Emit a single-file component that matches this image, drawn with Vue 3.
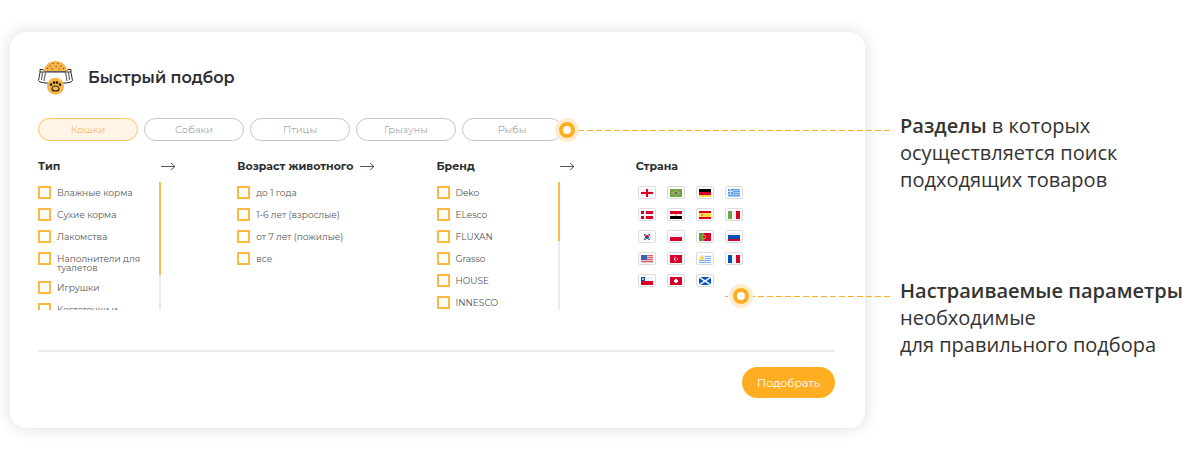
<script setup>
import { reactive, ref } from 'vue'

const tabs = ['Кошки', 'Собаки', 'Птицы', 'Грызуны', 'Рыбы']
const activeTab = ref('Кошки')

// Колонки с чекбоксами, thumb - высота ползунка в процентах
const columns = [
  {
    id: 'type',
    title: 'Тип',
    thumb: 73,
    items: ['Влажные корма', 'Сухие корма', 'Лакомства', 'Наполнители для туалетов', 'Игрушки', 'Когтеточки и']
  },
  {
    id: 'age',
    title: 'Возраст животного',
    thumb: 0,
    items: ['до 1 года', '1-6 лет (взрослые)', 'от 7 лет (пожилые)', 'все']
  },
  {
    id: 'brand',
    title: 'Бренд',
    thumb: 46,
    items: ['Deko', 'ELesco', 'FLUXAN', 'Grasso', 'HOUSE', 'INNESCO']
  }
]

// Флаги: прямоугольники [x, y, ширина, высота, цвет] на поле 12x8
const countries = [
  { name: 'Англия', rects: [[0, 0, 12, 8, '#f1f1f1'], [5, 0, 2, 8, '#d80027'], [0, 3, 12, 2, '#d80027']] },
  { name: 'Бразилия', rects: [[0, 0, 12, 8, '#6da544']], paths: [['M6 1 10.500 4 6 7 1.500 4z', '#b5b440'], ['M4.500 4a1.500 1.500 0 1 0 3 0a1.500 1.500 0 1 0-3 0', '#2f6bb5']] },
  { name: 'Германия', rects: [[0, 0, 12, 3, '#000'], [0, 3, 12, 3, '#d80027'], [0, 6, 12, 2, '#ffda44']] },
  { name: 'Греция', rects: [[0, 0, 12, 8, '#a9cdf7'], [0, 0, 12, 1, '#5a9ff0'], [0, 2, 12, 1, '#5a9ff0'], [0, 4, 12, 1, '#5a9ff0'], [0, 6, 12, 1, '#5a9ff0'], [0, 0, 5, 5, '#5a9ff0'], [2, 0, 1, 5, '#d5e6fb'], [0, 2, 5, 1, '#d5e6fb']] },
  { name: 'Дания', rects: [[0, 0, 12, 8, '#d80027'], [3, 0, 2, 8, '#f1f1f1'], [0, 3, 12, 2, '#f1f1f1']] },
  { name: 'Египет', rects: [[0, 0, 12, 3, '#d80027'], [0, 3, 12, 2, '#f1f1f1'], [0, 5, 12, 3, '#000'], [5, 3, 2, 2, '#ffb98a']] },
  { name: 'Испания', rects: [[0, 0, 12, 8, '#d80027'], [0, 2, 12, 4, '#ffda44'], [2, 3, 2, 2, '#e59a3a']] },
  { name: 'Италия', rects: [[0, 0, 4, 8, '#6da544'], [4, 0, 4, 8, '#f1f1f1'], [8, 0, 4, 8, '#d80027']] },
  { name: 'Корея', rects: [[0, 0, 12, 8, '#f7f7f7']], paths: [['M3 1h2v1H4v1H3zM7 1h2v2H8V2H7zM3 5h1v1h1v1H3zM8 5h1v2H7V6h1z', '#777'], ['M4 4a2 2 0 0 1 4 0z', '#d80027'], ['M4 4a2 2 0 0 0 4 0z', '#0052b4']] },
  { name: 'Польша', rects: [[0, 0, 12, 4, '#f1f1f1'], [0, 4, 12, 4, '#d80027']] },
  { name: 'Португалия', rects: [[0, 0, 5, 8, '#5c9a3b'], [5, 0, 7, 8, '#d80027']], paths: [['M3 4a2 2 0 1 0 4 0a2 2 0 1 0-4 0', '#e5b03d'], ['M4 3h2v2H4z', '#d80027']] },
  { name: 'Россия', rects: [[0, 0, 12, 2, '#f1f1f1'], [0, 2, 12, 4, '#0052b4'], [0, 6, 12, 2, '#d80027']] },
  { name: 'США', rects: [[0, 0, 12, 8, '#f3c6cc'], [0, 0, 12, 1, '#e0566b'], [0, 2, 12, 1, '#e0566b'], [0, 4, 12, 1, '#e0566b'], [0, 6, 12, 1, '#e0566b'], [0, 0, 6, 5, '#3d61ad']] },
  { name: 'Турция', rects: [[0, 0, 12, 8, '#d80027'], [7, 3, 1, 2, '#f3b6bf']], paths: [['M6 2a2 2 0 1 0 0 4l0-1a1 1 0 1 1 0-2z', '#f1f1f1']] },
  { name: 'Уругвай', rects: [[0, 0, 12, 8, '#eaf2fb'], [6, 1, 6, 1, '#7fb4f3'], [6, 3, 6, 1, '#7fb4f3'], [0, 5, 12, 1, '#7fb4f3'], [0, 7, 12, 1, '#7fb4f3']], paths: [['M1 3a2 2 0 1 0 4 0a2 2 0 1 0-4 0', '#ffda44']] },
  { name: 'Франция', rects: [[0, 0, 4, 8, '#0052b4'], [4, 0, 4, 8, '#f1f1f1'], [8, 0, 4, 8, '#d80027']] },
  { name: 'Чили', rects: [[0, 0, 12, 4, '#f1f1f1'], [0, 4, 12, 4, '#d80027'], [0, 0, 4, 4, '#0052b4'], [1, 1, 2, 2, '#9fbfe6']] },
  { name: 'Швейцария', rects: [[0, 0, 12, 8, '#d80027'], [5, 2, 2, 4, '#fff'], [4, 3, 4, 2, '#fff']] },
  { name: 'Шотландия', rects: [[0, 0, 12, 8, '#0052b4']], paths: [['M0 0h1.500L6 3 10.500 0H12v1L7.500 4 12 7v1h-1.500L6 5 1.500 8H0V7l4.500-3L0 1z', '#e4ecf7']] }
]

const checked = reactive({ type: [], age: [], brand: [], country: [] })

// Добавить или убрать страну
function toggleCountry(name) {
  const i = checked.country.indexOf(name)
  if (i === -1) {
    checked.country.push(name)
  } else {
    checked.country.splice(i, 1)
  }
}
</script>


<template>
  <div class="page">
    <form class="card" @submit.prevent>
      <header class="head">
        <svg class="logo" viewBox="0 0 35 35" aria-hidden="true">
          <path d="M2 9.500h3l1.500 1.500h22L30 9.500h3v3l1.500 8-1.500 1.500-5 1H7L2 22 .5 20.500 2 12.500z" fill="#fff" stroke="#2b2b2b" />
          <path d="M5.500 11C7 4.500 12 1 17.500 1S28 4.500 29.500 11z" fill="#f7b54a" />
          <g fill="#6a5020">
            <circle cx="15" cy="3.500" r=".7" /><circle cx="20" cy="3.500" r=".7" /><circle cx="18" cy="6.500" r=".7" />
            <circle cx="12" cy="6" r=".7" /><circle cx="23" cy="6" r=".7" /><circle cx="9.500" cy="8.500" r=".7" />
            <circle cx="14" cy="9" r=".7" /><circle cx="21" cy="9" r=".7" /><circle cx="25.500" cy="8.500" r=".7" />
          </g>
          <path d="M2 12h31" stroke="#2b2b2b" />
          <path d="M4.500 12.500 3.500 20M7.500 12.500 6 21M30.500 12.500 31.500 20M27.500 12.500 29 21" fill="none" stroke="#3a3a3a" stroke-width=".9" />
          <circle cx="17.500" cy="26.300" r="8.500" fill="#f7b54a" />
          <g fill="#2a2418">
            <ellipse cx="13" cy="24.500" rx="1.300" ry="1.600" /><ellipse cx="16" cy="22.500" rx="1.300" ry="1.600" />
            <ellipse cx="19" cy="22.500" rx="1.300" ry="1.600" /><ellipse cx="22" cy="24.500" rx="1.300" ry="1.600" />
          </g>
          <path d="M17.500 26c2 0 3.500 1.500 3.500 3s-1.500 2-3.500 2-3.500-.5-3.500-2 1.500-3 3.500-3z" fill="none" stroke="#2a2418" stroke-width="1.200" />
        </svg>
        <h1>Быстрый подбор</h1>
      </header>

      <nav class="tabs">
        <button
          v-for="tab in tabs"
          :key="tab"
          type="button"
          class="tab"
          :class="{ active: tab === activeTab }"
          @click="activeTab = tab"
        >{{ tab }}</button>
      </nav>

      <div class="columns">
        <section v-for="col in columns" :key="col.id" class="column">
          <div class="columnHead">
            <h2>{{ col.title }}</h2>
            <svg class="arrow" viewBox="0 0 15 8" aria-hidden="true">
              <path d="M0 4.500h14M10 1l4 3.500L10 8" fill="none" stroke="#555" />
            </svg>
          </div>
          <div class="scroll">
            <ul class="list">
              <li v-for="item in col.items" :key="item">
                <label class="option">
                  <input type="checkbox" :value="item" v-model="checked[col.id]">
                  <span>{{ item }}</span>
                </label>
              </li>
            </ul>
            <div v-if="col.thumb" class="track">
              <div class="thumb" :style="{ height: col.thumb + '%' }"></div>
            </div>
          </div>
        </section>

        <section class="column">
          <div class="columnHead">
            <h2>Страна</h2>
          </div>
          <div class="flags">
            <button
              v-for="c in countries"
              :key="c.name"
              type="button"
              class="flag"
              :class="{ chosen: checked.country.includes(c.name) }"
              :aria-label="c.name"
              @click="toggleCountry(c.name)"
            >
              <svg viewBox="0 0 12 8">
                <rect v-for="(r, i) in c.rects" :key="i" :x="r[0]" :y="r[1]" :width="r[2]" :height="r[3]" :fill="r[4]" />
                <path v-for="(p, i) in c.paths" :key="'p' + i" :d="p[0]" :fill="p[1]" />
              </svg>
            </button>
          </div>
        </section>
      </div>

      <footer class="foot">
        <button type="submit" class="submit">Подобрать</button>
      </footer>
    </form>

    <aside class="notes">
      <p class="note">
        <span class="pointer tabsPointer"><i class="dot"></i></span>
        <b>Разделы</b> в которых<br>осуществляется поиск<br>подходящих товаров
      </p>
      <p class="note">
        <span class="pointer paramsPointer"><i class="dot"></i></span>
        <b>Настраиваемые параметры</b><br>необходимые<br>для правильного подбора
      </p>
    </aside>
  </div>
</template>

<style>
body {
  background: #fff;
}
</style>

<style scoped>
.page {
  display: flex;
  align-items: flex-start;
  padding: 32px 0 32px 10px;
  font-family: Montserrat, Inter, sans-serif;
  color: #2b2e33;
}

.card {
  flex: 1;
  min-width: 0;
  box-sizing: border-box;
  padding: 28px 30px 30px 28px;
  border-radius: 16px;
  background: #fff;
  box-shadow: 0 0 16px rgba(0, 0, 0, 0.14);
}

.head {
  display: flex;
  align-items: center;
  gap: 15px;
}

.logo {
  width: 35px;
  height: 35px;
}

h1 {
  margin: 0;
  font-size: 16px;
  line-height: 20px;
  font-weight: 600;
}

.tabs {
  display: flex;
  gap: 6px;
  margin-top: 23px;
}

.tab {
  width: 100px;
  height: 23px;
  padding: 0;
  border: 1px solid #c4c4c4;
  border-radius: 12px;
  background: #fff;
  font: 300 10px Montserrat, Inter, sans-serif;
  color: #888;
}

.tab.active {
  border-color: #fdc45c;
  background: #fff5e6;
  color: #fda51a;
}

.columns {
  display: grid;
  grid-template-columns: repeat(4, 1fr);
  margin-top: 18px;
}

.columnHead {
  display: flex;
  align-items: center;
  justify-content: space-between;
  width: 138px;
  height: 14px;
}

h2 {
  margin: 0;
  font-size: 11px;
  line-height: 14px;
  font-weight: 700;
  white-space: nowrap;
}

.arrow {
  width: 15px;
  height: 8px;
}

.scroll {
  display: flex;
  justify-content: space-between;
  width: 123px;
  height: 128px;
  margin-top: 9px;
  overflow: hidden;
}

.list {
  display: flex;
  flex-direction: column;
  gap: 9px;
  margin: 0;
  padding: 4px 0 0;
  list-style: none;
}

.option {
  display: flex;
  align-items: flex-start;
  gap: 6px;
  font-size: 9px;
  line-height: 9px;
  color: #555;
}

.option span {
  padding-top: 2px;
}

.option input {
  flex: none;
  appearance: none;
  box-sizing: border-box;
  width: 13px;
  height: 13px;
  margin: 0;
  border: 2px solid #fdb840;
  background: #fff;
}

.option input:checked {
  background: #fdb840;
}

.track {
  flex: none;
  width: 2px;
  background: #ebebeb;
}

.thumb {
  background: #fdbc4a;
}

.flags {
  display: grid;
  grid-template-columns: repeat(4, 18px);
  gap: 9px 11px;
  padding: 13px 0 0 2px;
}

.flag {
  display: flex;
  align-items: center;
  justify-content: center;
  height: 13px;
  padding: 0;
  border: 1px solid #dcdcdc;
  border-radius: 2px;
  background: #fff;
}

.flag.chosen {
  border-color: #fdb840;
}

.flag svg {
  width: 12px;
  height: 8px;
}

.foot {
  display: flex;
  justify-content: flex-end;
  margin-top: 40px;
  padding-top: 15px;
  border-top: 2px solid #ebebeb;
}

.submit {
  width: 93px;
  height: 31px;
  padding: 0;
  border: 0;
  border-radius: 16px;
  background: #ffae22;
  font: 400 11px Montserrat, Inter, sans-serif;
  color: #fff;
}

.notes {
  flex: none;
  display: flex;
  flex-direction: column;
  gap: 84px;
  width: 300px;
  margin-left: 35px;
  padding-top: 80px;
}

.note {
  position: relative;
  margin: 0;
  font-family: "Open Sans", "Noto Sans", sans-serif;
  font-size: 20px;
  line-height: 27px;
  color: #333;
  white-space: nowrap;
}

.note b {
  font-weight: 600;
}

/* Пунктир от подписи к элементу карточки */
.pointer {
  position: absolute;
  right: calc(100% + 10px);
  height: 1px;
  background: repeating-linear-gradient(to left, #ffae22 0 6px, transparent 6px 9px);
}

.tabsPointer {
  top: 18px;
  width: 323px;
}

.paramsPointer {
  top: 19px;
  width: 165px;
}

.dot {
  position: absolute;
  top: -8px;
  left: -8px;
  box-sizing: border-box;
  width: 16px;
  height: 16px;
  border: 4px solid #ffae22;
  border-radius: 50%;
  background: #fff;
  box-shadow: 0 0 0 4px #feeccd;
}

.paramsPointer .dot {
  left: 8px;
}
</style>
